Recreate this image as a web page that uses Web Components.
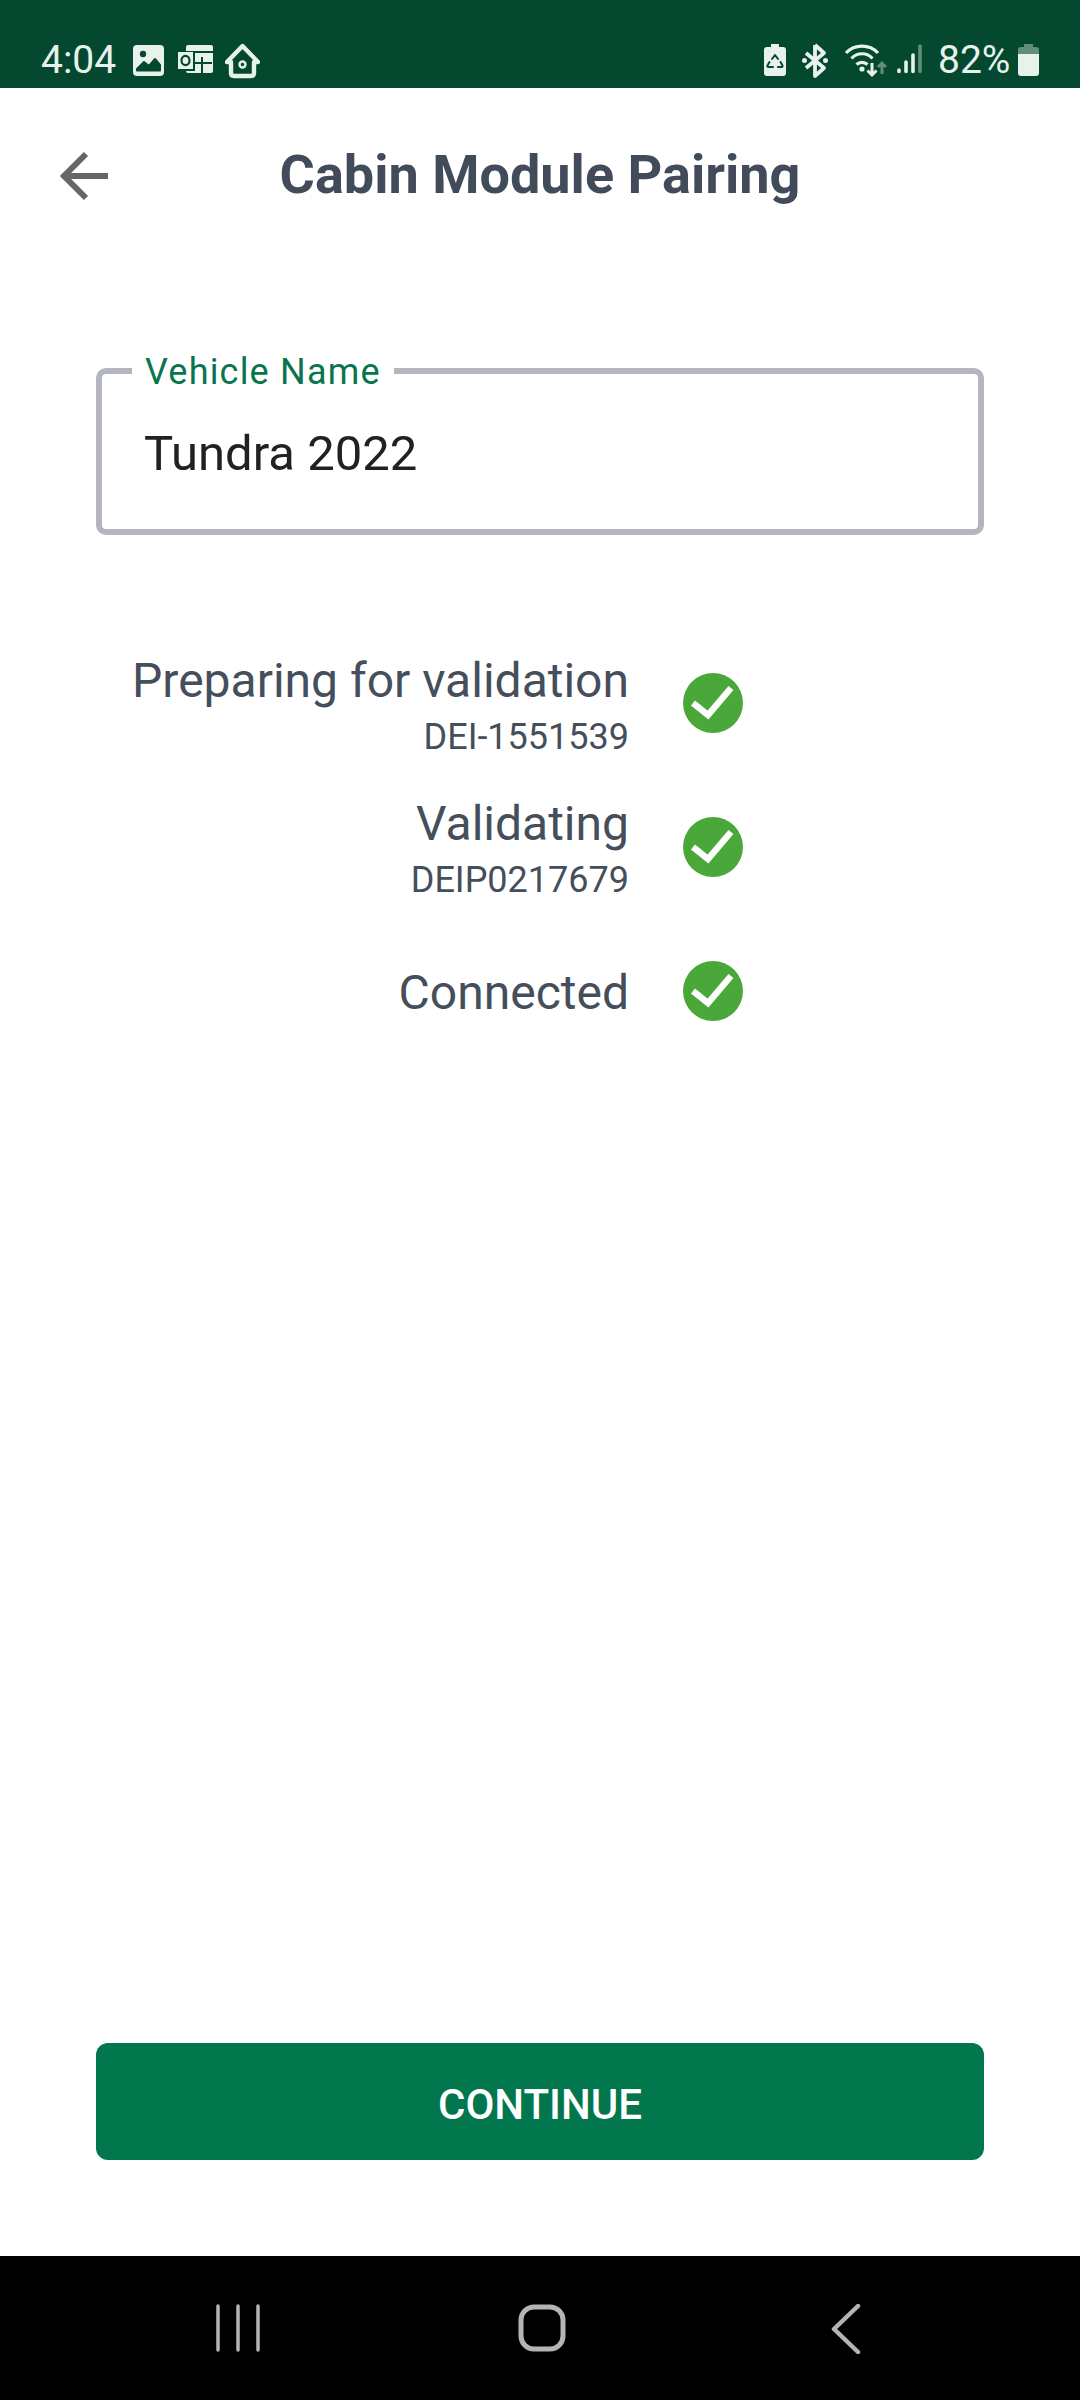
<!DOCTYPE html>
<html>
<head>
<meta charset="utf-8">
<title>Cabin Module Pairing</title>
<style>
  html, body { margin: 0; padding: 0; background: #fff; }
  body { font-family: Roboto, "Liberation Sans", sans-serif; }
</style>
</head>
<body>
<pairing-screen>
  <status-bar slot="top"></status-bar>
  <app-header slot="top">Cabin Module Pairing</app-header>
  <name-field label="Vehicle Name">Tundra 2022</name-field>
  <step-list>
    <step-row pad="22" sub="DEI-1551539">Preparing for validation</step-row>
    <step-row pad="21" sub="DEIP0217679">Validating</step-row>
    <step-row pad="46">Connected</step-row>
  </step-list>
  <primary-button slot="bottom">CONTINUE</primary-button>
  <nav-bar slot="nav"></nav-bar>
</pairing-screen>

<script>
class PairingScreen extends HTMLElement {
  constructor() {
    super();
    const shadow = this.attachShadow({ mode: "open" });
    shadow.innerHTML = `
      <style>
        :host { display: flex; flex-direction: column; width: 1080px; height: 2400px; background: #fff; overflow: hidden; }
        main { flex: 1; display: flex; flex-direction: column; padding: 104px 96px 96px; }
        .spacer { flex: 1; }
      </style>
      <slot name="top"></slot>
      <main>
        <slot></slot>
        <div class="spacer"></div>
        <slot name="bottom"></slot>
      </main>
      <slot name="nav"></slot>
    `;
  }
}

class StatusBar extends HTMLElement {
  constructor() {
    super();
    const ink = "#e7f2ed";
    const bg = "#03482f";
    const dim = "#5f8e7c";
    const shadow = this.attachShadow({ mode: "open" });
    shadow.innerHTML = `
      <style>
        :host { display: flex; box-sizing: border-box; height: 88px; padding: 43px 41px 0 41px; background: ${bg}; color: ${ink}; font-size: 39px; justify-content: space-between; }
        .side { display: flex; align-items: flex-start; height: 36px; }
        span { line-height: 36px; margin-top: -1px; }
        svg { display: block; flex: none; height: 36px; }
      </style>
      <div class="side">
        <span style="width:74px">4:04</span>
        <svg style="margin-left:18px" width="31" viewBox="0 0 31 36">
          <rect y="2" width="31" height="31" rx="4" fill="${ink}"/>
          <circle cx="10" cy="11" r="3.200" fill="${bg}"/>
          <path d="M4 27.500v-1.500l7-7 5 4 6-7 5 6v5.500z" fill="${bg}" stroke="${bg}" stroke-width="2" stroke-linejoin="round"/>
        </svg>
        <svg style="margin-left:14px" width="35" viewBox="0 0 35 36">
          <rect x="8" y="2" width="27" height="28" rx="2" fill="${ink}"/>
          <path d="M17 9h18M24 14v16M16 20h18" stroke="${bg}" stroke-width="2" fill="none"/>
          <rect x="-1" y="8" width="18" height="20" fill="${bg}"/>
          <rect y="9" width="15" height="17" fill="${ink}"/>
          <ellipse cx="7.500" cy="17.500" rx="4" ry="4.600" fill="none" stroke="${bg}" stroke-width="2.200"/>
        </svg>
        <svg style="margin-left:12px" width="35" viewBox="0 0 35 36">
          <path d="M2 19 17.500 3 33 19h-4v11q0 3-3 3H9q-3 0-3-3V19z" fill="none" stroke="${ink}" stroke-width="4.400" stroke-linejoin="round"/>
          <circle cx="17.500" cy="21.500" r="3" fill="none" stroke="${ink}" stroke-width="2.400"/>
        </svg>
      </div>
      <div class="side">
        <svg width="22" viewBox="0 0 22 36">
          <path d="M7 1h8v3h4q3 0 3 3v23q0 3-3 3H3q-3 0-3-3V7q0-3 3-3h4z" fill="${ink}"/>
          <path d="M8 16l3-4 3 4M16.500 19l2 3.500q.5 1.500-1 1.500H14M9 24H4.500q-1.500 0-1-1.500l2-3.500" fill="none" stroke="${bg}" stroke-width="2" stroke-linecap="round" stroke-linejoin="round"/>
        </svg>
        <svg style="margin-left:16px" width="26" viewBox="0 0 26 36">
          <path d="M13 2v31l9-8L4 10M13 2l9 8L4 25" fill="none" stroke="${ink}" stroke-width="3.800" stroke-linejoin="round"/>
          <circle cx="2.500" cy="17.500" r="2.500" fill="${ink}"/>
          <circle cx="23.500" cy="17.500" r="2.500" fill="${ink}"/>
        </svg>
        <svg style="margin-left:16px" width="43" viewBox="0 0 43 36">
          <path d="M2 10a22 22 0 0 1 32 0M7.500 15.500a14 14 0 0 1 21 0M12.500 21.500a8 8 0 0 1 11 0" fill="none" stroke="${ink}" stroke-width="3.200"/>
          <circle cx="18" cy="26" r="2.600" fill="${ink}"/>
          <path d="M28 20v12M23.500 27.500 28 32l4.500-4.500" fill="none" stroke="${ink}" stroke-width="3"/>
          <path d="M38 31V20M34 24l4-4 4 4" fill="none" stroke="${dim}" stroke-width="3"/>
        </svg>
        <svg style="margin-left:10px" width="27" viewBox="0 0 27 36">
          <path d="M2 27v1.500M9 19v9.500M16 12v16.500" stroke="${ink}" stroke-width="3.600" stroke-linecap="round" fill="none"/>
          <path d="M23 3v25.500" stroke="${dim}" stroke-width="3.600" stroke-linecap="round" fill="none"/>
        </svg>
        <span style="margin-left:14px;width:73px;white-space:nowrap">82%</span>
        <svg style="margin-left:7px" width="21" viewBox="0 0 21 36">
          <path d="M6 1h9v3h3q3 0 3 3v4H0V7q0-3 3-3h3z" fill="${dim}"/>
          <path d="M0 11h21v19q0 3-3 3H3q-3 0-3-3z" fill="${ink}"/>
        </svg>
      </div>
    `;
  }
}

class AppHeader extends HTMLElement {
  constructor() {
    super();
    const shadow = this.attachShadow({ mode: "open" });
    shadow.innerHTML = `
      <style>
        :host { display: grid; grid-template-columns: 1fr auto 1fr; align-items: center; height: 176px; color: #414b5a; }
        h1 { margin: 0; padding-bottom: 2px; font: 700 54px/174px Roboto, sans-serif; }
        svg { display: block; margin-left: 58px; }
      </style>
      <svg width="54" height="52" viewBox="0 0 54 52">
        <path d="M50 26H7M28 4 6 26l22 22" fill="none" stroke="#666" stroke-width="6"/>
      </svg>
      <h1><slot></slot></h1>
      <div></div>
    `;
  }
}

class NameField extends HTMLElement {
  constructor() {
    super();
    const shadow = this.attachShadow({ mode: "open" });
    shadow.innerHTML = `
      <style>
        :host { display: block; position: relative; box-sizing: border-box; height: 167px; border: 6px solid #b3b5c0; border-radius: 10px; padding: 52px 42px 0; color: #212121; font-size: 49px; line-height: 56px; }
        label { position: absolute; left: 30px; top: -22px; padding: 0 13px; background: #fff; color: #08754f; font-size: 36px; line-height: 40px; letter-spacing: 1.200px; }
      </style>
      <label></label>
      <slot></slot>
    `;
    shadow.querySelector("label").textContent = this.getAttribute("label");
  }
}

class StepList extends HTMLElement {
  constructor() {
    super();
    const shadow = this.attachShadow({ mode: "open" });
    shadow.innerHTML = `
      <style>
        :host { display: flex; flex-direction: column; margin-top: 96px; }
      </style>
      <slot></slot>
    `;
  }
}

class StepRow extends HTMLElement {
  constructor() {
    super();
    const shadow = this.attachShadow({ mode: "open" });
    shadow.innerHTML = `
      <style>
        :host { display: flex; align-items: flex-start; gap: 54px; height: 144px; color: #454e5b; }
        .text { width: 533px; text-align: right; }
        .name { font-size: 48px; line-height: 56px; }
        .sub { font-size: 36px; line-height: 52px; margin-top: 2px; }
        svg { display: block; flex: none; margin-top: 42px; }
      </style>
      <div class="text">
        <div class="name"><slot></slot></div>
        <div class="sub"></div>
      </div>
      <svg width="60" height="60" viewBox="0 0 60 60">
        <circle cx="30" cy="30" r="30" fill="#4aa83a"/>
        <path d="M10 30l15 12 23-27" fill="none" stroke="#fff" stroke-width="6.500"/>
      </svg>
    `;
    shadow.querySelector(".text").style.paddingTop = this.getAttribute("pad") + "px";
    const sub = shadow.querySelector(".sub");
    if (this.hasAttribute("sub")) {
      sub.textContent = this.getAttribute("sub");
    } else {
      sub.remove();
    }
  }
}

class PrimaryButton extends HTMLElement {
  constructor() {
    super();
    const shadow = this.attachShadow({ mode: "open" });
    shadow.innerHTML = `
      <style>
        :host { display: flex; align-items: center; justify-content: center; box-sizing: border-box; height: 117px; padding-top: 5px; border-radius: 12px; background: #02774e; color: #fff; font-size: 42px; font-weight: 500; }
      </style>
      <slot></slot>
    `;
  }
}

class NavBar extends HTMLElement {
  constructor() {
    super();
    const shadow = this.attachShadow({ mode: "open" });
    shadow.innerHTML = `
      <style>
        :host { display: grid; grid-template-columns: repeat(3, 304px); box-sizing: border-box; height: 144px; padding: 48px 0 0 86px; background: #000; }
        svg { display: block; justify-self: center; }
      </style>
      <svg width="44" height="48" viewBox="0 0 44 48">
        <path d="M2 2v44M22 2v44M42 2v44" fill="none" stroke="#b4b4b4" stroke-width="3.500" stroke-linecap="round"/>
      </svg>
      <svg width="48" height="48" viewBox="0 0 48 48">
        <rect x="3" y="3" width="42" height="42" rx="13" fill="none" stroke="#b4b4b4" stroke-width="5"/>
      </svg>
      <svg width="30" height="50" viewBox="0 0 30 50">
        <path d="M27 2 3 25l24 23" fill="none" stroke="#b4b4b4" stroke-width="4.500" stroke-linecap="round" stroke-linejoin="round"/>
      </svg>
    `;
  }
}

customElements.define("pairing-screen", PairingScreen);
customElements.define("status-bar", StatusBar);
customElements.define("app-header", AppHeader);
customElements.define("name-field", NameField);
customElements.define("step-list", StepList);
customElements.define("step-row", StepRow);
customElements.define("primary-button", PrimaryButton);
customElements.define("nav-bar", NavBar);
</script>
</body>
</html>
